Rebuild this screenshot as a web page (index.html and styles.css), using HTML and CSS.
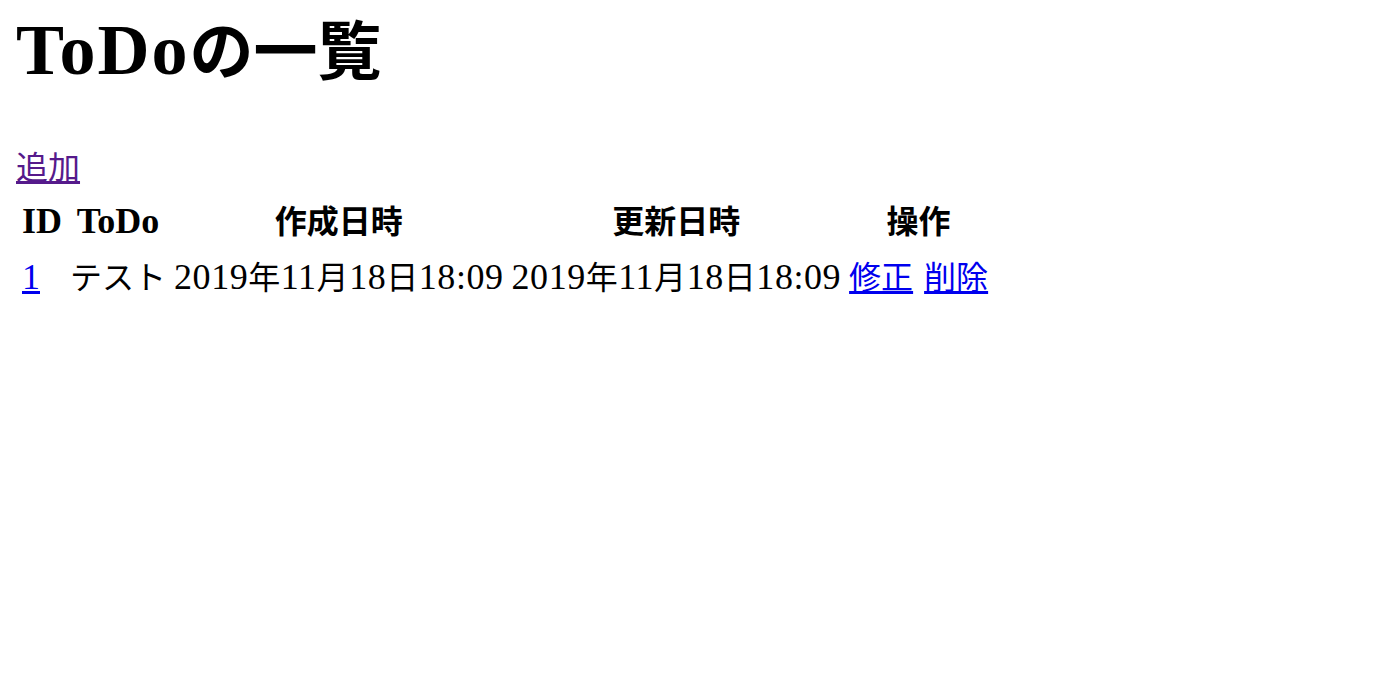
FILE: index.html
```html
<!DOCTYPE html>
<html lang="ja">
<head>
<meta charset="utf-8">
<title>ToDoの一覧</title>
<link rel="stylesheet" href="styles.css">
</head>
<body>
<h1 class="title"><span class="title-latin">ToDo</span><span class="ja">の一覧</span></h1>
<div class="actions"><a class="visited" href="#add"><span class="ja">追加</span></a></div>
<table class="todo-table">
  <thead>
    <tr>
      <th>ID</th>
      <th>ToDo</th>
      <th><span class="ja">作成日時</span></th>
      <th><span class="ja">更新日時</span></th>
      <th><span class="ja">操作</span></th>
    </tr>
  </thead>
  <tbody>
    <tr>
      <td><a href="#1">1</a></td>
      <td><span class="ja">テスト</span></td>
      <td class="date">2019<span class="ja">年</span>11<span class="ja">月</span>18<span class="ja">日</span>18:09</td>
      <td class="date">2019<span class="ja">年</span>11<span class="ja">月</span>18<span class="ja">日</span>18:09</td>
      <td class="ops"><a href="#edit"><span class="ja">修正</span></a> <a href="#delete"><span class="ja">削除</span></a></td>
    </tr>
  </tbody>
</table>
</body>
</html>
```
FILE: styles.css
```css
html, body {
  background: #ffffff;
}
body {
  margin: 0 16px;
  font-family: "Liberation Serif", "Noto Sans CJK JP", serif;
  font-size: 36px;
  line-height: 48px;
  color: #000000;
}
.ja {
  font-family: "Noto Sans CJK JP", serif;
  font-size: 32px;
  line-height: 1;
}
.title {
  font-size: 72px;
  line-height: 80px;
  font-weight: bold;
  margin: 10px 0 53px;
}
.title-latin {
  letter-spacing: 2px;
}
.title .ja {
  font-size: 64px;
}
a {
  color: #0000ee;
  text-decoration: underline;
}
a.visited {
  color: #551a8b;
}
.actions {
  margin: 0;
}
.todo-table {
  border-collapse: separate;
  border-spacing: 4px;
}
.todo-table th,
.todo-table td {
  padding: 2px;
  vertical-align: middle;
}
.todo-table th {
  font-weight: bold;
  text-align: center;
}
.todo-table td {
  text-align: left;
}
.date {
  letter-spacing: 0.55px;
}
.ops {
  word-spacing: 2px;
}
```
